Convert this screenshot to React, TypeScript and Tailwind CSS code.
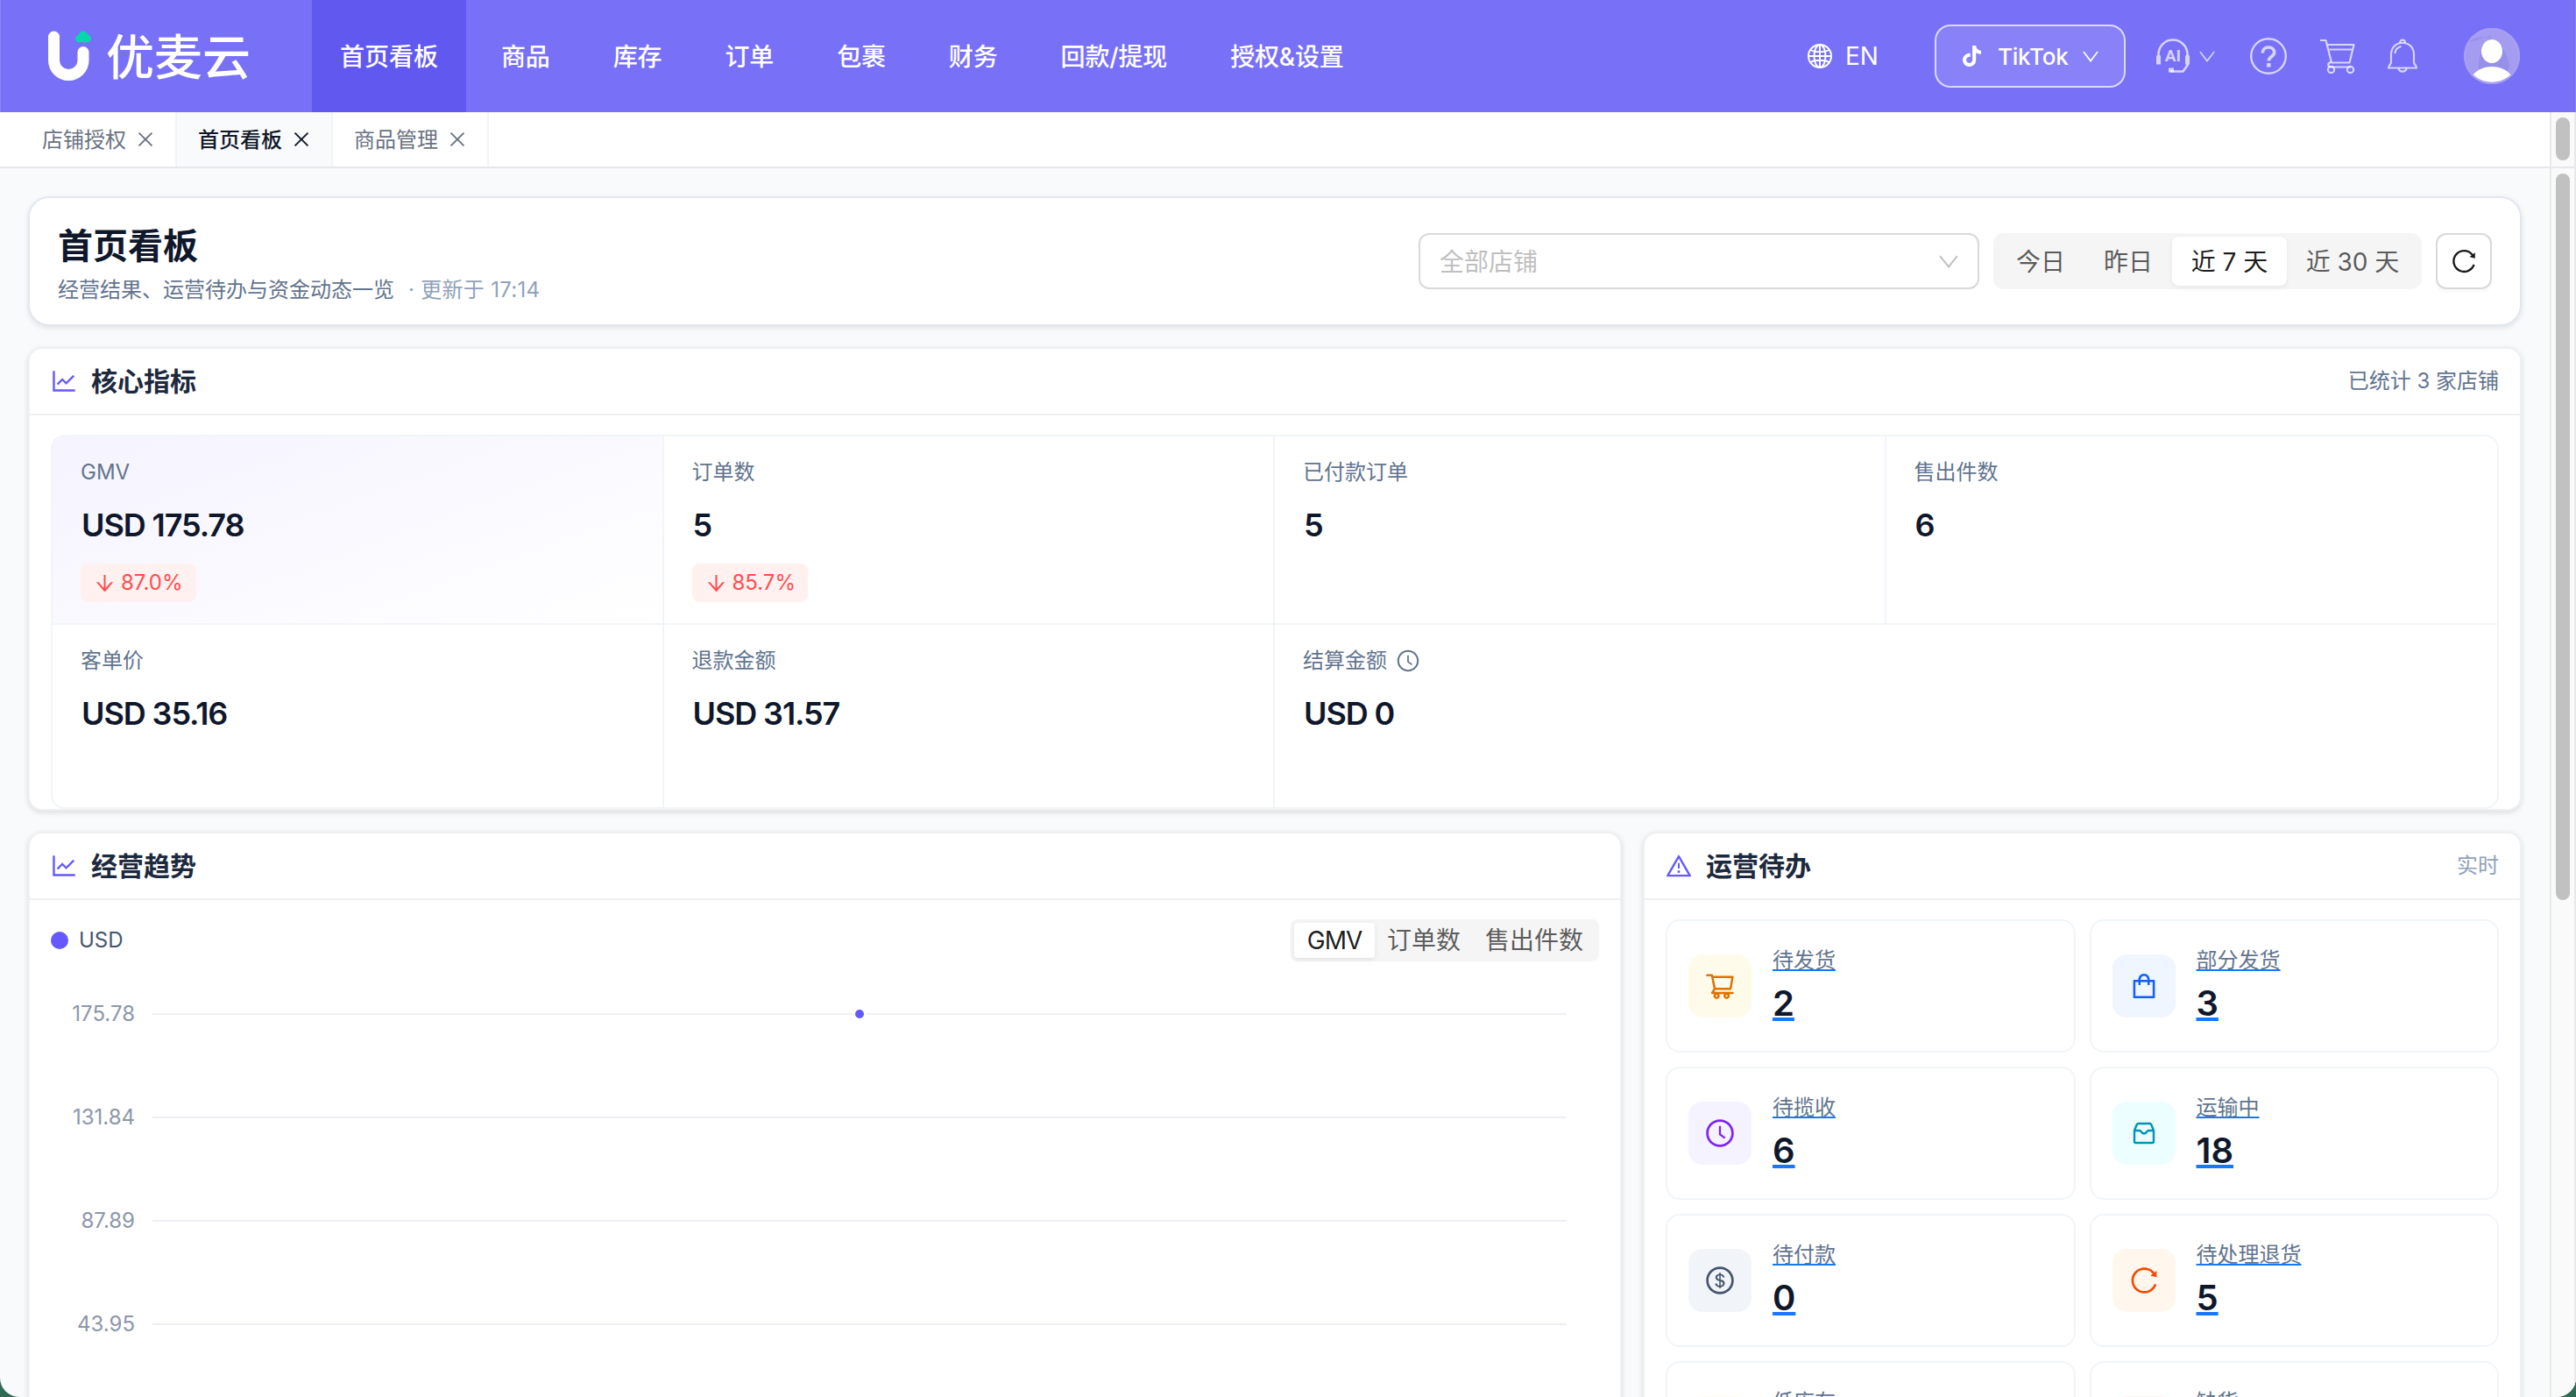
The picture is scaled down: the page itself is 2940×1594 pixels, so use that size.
import type { ReactNode } from "react";
import {
  AiOutlineArrowDown,
  AiOutlineClockCircle,
  AiOutlineClose,
  AiOutlineDollar,
  AiOutlineLineChart,
  AiOutlineReload,
  AiOutlineShopping,
  AiOutlineShoppingCart,
  AiOutlineWarning,
} from "react-icons/ai";
import { FaTiktok } from "react-icons/fa";

const NAV = ["首页看板", "商品", "库存", "订单", "包裹", "财务", "回款/提现", "授权&设置"];
const TABS = ["店铺授权", "首页看板", "商品管理"];

function Logo() {
  return (
    <div className="flex h-full items-center pl-[53px]">
      <svg className="h-[58px] w-[52px]" viewBox="54 35 52 58" fill="none">
        <path d="M61.5 42V68.75A16.75 16.75 0 0 0 95 68.75V59.5" stroke="#fff" strokeWidth="13" strokeLinecap="round" />
        <path
          d="M90 48.2a3.9 3.9 0 0 1-3.9-4.2c0-2 1.6-3.6 3.5-4 .9-2.6 2.9-4.4 5.5-4.4s4.600 1.800 5.500 4.400c2 .4 3.500 2 3.500 4a3.900 3.900 0 0 1-3.900 4.200z"
          fill="#05d6ac"
        />
      </svg>
      <span className="ml-[15px] pt-[2px] text-[55px] leading-[64px] font-medium">优麦云</span>
    </div>
  );
}

function Chevron({ className }: { className: string }) {
  return (
    <svg className={className} viewBox="0 0 20 14" fill="none" stroke="currentColor" preserveAspectRatio="none">
      <path d="M1 1L10 12.500L19 1" strokeWidth="1.8" />
    </svg>
  );
}

function Globe() {
  return (
    <svg className="size-[30px]" viewBox="0 0 30 30" fill="none" stroke="currentColor" strokeWidth="2">
      <circle cx="15" cy="15" r="13" />
      <ellipse cx="15" cy="15" rx="6.500" ry="13" />
      <path d="M15 2v26M2 15h26M4.500 8c5 3 16 3 21 0M4.500 22c5-3 16-3 21 0" />
    </svg>
  );
}

function Header() {
  return (
    <header className="flex h-[128px] shrink-0 items-center border-x border-[#8b84f9] bg-[#7870f7] text-white">
      <div className="h-full w-[355px]">
        <Logo />
      </div>
      <nav className="flex h-full gap-2">
        {NAV.map((item, i) => (
          <a
            key={item}
            className={
              i === 0
                ? "flex items-center bg-[#6158f0] px-8 pt-[2px] text-[28px] font-medium"
                : "flex items-center px-8 pt-[2px] text-[28px] font-medium tracking-[-0.150px]"
            }
          >
            {item}
          </a>
        ))}
      </nav>
      <div className="ml-auto flex items-center pr-[63px]">
        <Globe />
        <span className="ml-[14px] w-[102px] text-[28px]">EN</span>
        <div className="flex h-[72px] w-[218px] items-center rounded-[18px] border-2 border-white/70 bg-white/12 pl-[30px]">
          <FaTiktok className="h-[24px] w-[21px]" />
          <span className="ml-[19px] w-[97px] text-[26px] font-medium tracking-[-0.200px]">TikTok</span>
          <Chevron className="h-[13px] w-[18px]" />
        </div>
        <div className="flex items-center text-white/70">
          <svg className="ml-[33px] h-[40px] w-[42px]" viewBox="0 0 42 40" fill="none" stroke="currentColor">
            <path d="M4.500 20v-2a16.500 16.500 0 0 1 33 0v2M37.500 29v1.500l-5 7H18" strokeWidth="2.600" />
            <path d="M4.500 19.500v10M37.500 19.500v10" strokeWidth="5" />
            <path d="M16 36h6" strokeWidth="5" />
            <text x="21" y="26" textAnchor="middle" fontSize="19" fontWeight="700" fontFamily="Roboto, sans-serif" fill="currentColor" stroke="none">
              AI
            </text>
          </svg>
          <Chevron className="ml-[9px] h-[13px] w-[18px]" />
          <svg className="ml-[40px] size-[42px]" viewBox="0 0 42 42" fill="none" stroke="currentColor">
            <circle cx="21" cy="21" r="19.800" strokeWidth="2.400" />
            <path d="M14.300 17.500c0-4 2.700-6.500 6.700-6.500s6.700 2.300 6.700 5.800c0 4.700-6.400 4.700-6.400 9.700" strokeWidth="3.600" />
            <path d="M21.300 29v4.500" strokeWidth="4.500" />
          </svg>
          <svg className="ml-[38px] h-[40px] w-[42px]" viewBox="0 0 42 40" fill="none" stroke="currentColor" strokeWidth="2.200" strokeLinejoin="round">
            <path d="M0 2h6.500l6.500 25.500h20.500L38.500 7H8.500M10.500 12.500h26" />
            <path d="M13 27c-5 0-5 5.500 0 5.500h22" />
            <circle cx="12.500" cy="35.500" r="3.600" />
            <circle cx="34.500" cy="35.500" r="3.600" />
          </svg>
          <svg className="ml-[34px] h-[40px] w-[36px]" viewBox="0 0 36 40" fill="none" stroke="currentColor" strokeWidth="2.200" strokeLinejoin="round">
            <path d="M18 5C10 5 5 10.500 5 18v9c0 3-3 3-3 6.500h32c0-3.500-3-3.500-3-6.500v-9C31 10.500 26 5 18 5z" />
            <path d="M15 5c0-4.500 6-4.500 6 0M13.500 33.500c0 5.500 9 5.500 9 0M9.500 17c0-4.500 3-7 7-8" />
          </svg>
        </div>
        <svg className="ml-[52px] size-[64px]" viewBox="0 0 64 64">
          <circle cx="32" cy="32" r="32" fill="#a39cf0" />
          <path d="M4 17C22 2 50 14 52 46L32 62 18 52C14 34 22 16 34 8z" fill="#9790ea" />
          <circle cx="32" cy="32" r="31" fill="none" stroke="#a7a0f3" strokeWidth="2" />
          <ellipse cx="32" cy="26.500" rx="12" ry="13.500" fill="#fff" />
          <path d="M10.500 53C22 41 42 41 53.500 53 42 64.500 22 64.500 10.500 53z" fill="#fff" />
        </svg>
      </div>
    </header>
  );
}

function TabBar() {
  return (
    <div className="flex h-[64px] shrink-0 border-b-2 border-[#e5e7eb] bg-white">
      <div className="flex flex-1 pl-[24px]">
        {TABS.map((tab, i) => (
          <div
            key={tab}
            className={
              i === 1
                ? "flex w-[178px] items-center border-r-2 border-[#f3f4f6] bg-[#f9fafb] pl-6 text-[24px] font-medium text-[#101828]"
                : "flex w-[178px] items-center border-r-2 border-[#f3f4f6] pl-6 text-[24px] text-[#6a7282]"
            }
          >
            <span className="pt-[2px]">{tab}</span>
            <AiOutlineClose className="ml-[10px] size-[24px]" />
          </div>
        ))}
      </div>
      <Scrollbar>
        <div className="mt-[6px] h-[49px] w-[16px] rounded-full bg-[#c1c1c1]" />
      </Scrollbar>
    </div>
  );
}

function Scrollbar({ children }: { children: ReactNode }) {
  return <div className="flex w-[30px] justify-center border-x-2 border-[#e8e8e8] bg-[#fafafa]">{children}</div>;
}

function PageHeading() {
  return (
    <section className="flex h-[148px] shrink-0 items-center rounded-[24px] border-2 border-[#e2e8f0] bg-white px-8 shadow-[0_2px_6px_rgba(0,0,0,0.1)]">
      <div className="pt-[9px]">
        <h1 className="text-[40px] leading-[56px] font-semibold text-[#0f172b]">首页看板</h1>
        <p className="text-[24px] leading-[44px] text-[#62748e]">
          经营结果、运营待办与资金动态一览<span className="ml-[16px] tracking-[0.300px] text-[#90a1b9]">· 更新于 17:14</span>
        </p>
      </div>
      <div className="ml-auto flex gap-4">
        <div className="flex h-[64px] w-[640px] items-center justify-between rounded-[12px] border-2 border-[#d9d9d9] px-[22px] text-[28px] text-[#bfbfbf]">
          <span className="pt-[1px]">全部店铺</span>
          <Chevron className="h-[15px] w-[22px]" />
        </div>
        <div className="flex h-[64px] rounded-[12px] bg-[#f5f5f5] p-1 text-[28px] text-black/65">
          <span className="flex w-[100px] items-center justify-center pt-[1px]">今日</span>
          <span className="flex w-[100px] items-center justify-center pt-[1px]">昨日</span>
          <span className="flex w-[131px] items-center justify-center rounded-[8px] bg-white pt-[1px] text-black/90 shadow-[0_2px_6px_rgba(0,0,0,0.06)]">
            近 7 天
          </span>
          <span className="flex w-[150px] items-center justify-center pt-[1px]">近 30 天</span>
        </div>
        <button className="flex size-[64px] items-center justify-center rounded-[12px] border-2 border-[#d9d9d9] text-black/90 shadow-[0_4px_0_rgba(0,0,0,0.02)]">
          <AiOutlineReload className="size-[32px]" />
        </button>
      </div>
    </section>
  );
}

function Card({ icon, title, extra, className, children }: { icon: ReactNode; title: string; extra?: ReactNode; className: string; children: ReactNode }) {
  return (
    <section className={`${className} flex flex-col overflow-hidden rounded-[16px] border-2 border-[#f0f0f0] bg-white shadow-[0_2px_6px_rgba(0,0,0,0.13)]`}>
      <div className="flex h-[76px] shrink-0 items-center border-b-2 border-[#f0f0f0] px-6 text-[24px]">
        <span className="-mx-[2px] text-[34px] text-[#6459ff]">{icon}</span>
        <h2 className="ml-4 flex-1 text-[30px] leading-[44px] font-semibold text-[#1d293d]">{title}</h2>
        {extra}
      </div>
      {children}
    </section>
  );
}

type Metric = { label: string; value: string; change?: string; cell: string; clock?: boolean };

const METRICS: Metric[] = [
  { label: "GMV", value: "USD 175.78", change: "87.0%", cell: "border-r-2 border-b-2 bg-[linear-gradient(160deg,#f5f3ff_0%,#ffffff_100%)]" },
  { label: "订单数", value: "5", change: "85.7%", cell: "border-r-2 border-b-2" },
  { label: "已付款订单", value: "5", cell: "border-r-2 border-b-2" },
  { label: "售出件数", value: "6", cell: "border-b-2" },
  { label: "客单价", value: "USD 35.16", cell: "border-r-2" },
  { label: "退款金额", value: "USD 31.57", cell: "border-r-2" },
  { label: "结算金额", value: "USD 0", cell: "", clock: true },
];

function MetricCell({ label, value, change, cell, clock }: Metric) {
  return (
    <div className={`${cell} flex flex-col items-start border-[#f1f5f9] px-8 pt-[22px]`}>
      <div className="flex h-[38px] items-center text-[24px] text-[#62748e]">
        {label}
        {clock && <AiOutlineClockCircle className="ml-[10px] size-[28px]" />}
      </div>
      <div className="mt-[17px] ml-[1px] text-[36px] leading-[48px] font-semibold tracking-[-1.100px] text-[#0f172b]">{value}</div>
      {change && (
        <div className="mt-[20px] flex h-[44px] w-[132px] items-center rounded-[8px] bg-[#fff1f0] pl-[14px] text-[24px] text-[#ff4d4f]">
          <AiOutlineArrowDown className="size-[27px]" />
          <span className="ml-[5px]">{change}</span>
        </div>
      )}
    </div>
  );
}

const TICKS = ["175.78", "131.84", "87.89", "43.95"];

function TrendChart() {
  return (
    <div className="relative mt-[1px] flex flex-col">
      {TICKS.map((t) => (
        <div key={t} className="flex h-[118px] items-center pr-[61px]">
          <span className="w-[120px] text-right text-[24px] text-[#8d96ab]">{t}</span>
          <span className="ml-[20px] h-[2px] flex-1 bg-[#eeeff4]" />
        </div>
      ))}
      <span className="absolute top-[52px] left-[940px] size-[14px] rounded-full border-2 border-white bg-[#6459ff]" />
    </div>
  );
}

function Tray() {
  return (
    <svg className="size-[36px]" viewBox="-18 -18 36 36" fill="none" stroke="currentColor" strokeWidth="2.400" strokeLinejoin="round">
      <path d="M-6.500-11h13a2 2 0 0 1 1.800 1.200L11-3v12.500a1.500 1.500 0 0 1-1.500 1.500h-19a1.500 1.500 0 0 1-1.500-1.500V-3l2.700-6.800A2 2 0 0 1-6.500-11z" />
      <path d="M-11-3h6c1.500 0 2 3.500 5 3.500S3.500-3 5-3h6" />
    </svg>
  );
}

const TODOS = [
  { label: "待发货", value: "2", tone: "bg-amber-50 text-amber-600", icon: <AiOutlineShoppingCart /> },
  { label: "部分发货", value: "3", tone: "bg-blue-50 text-blue-600", icon: <AiOutlineShopping /> },
  { label: "待揽收", value: "6", tone: "bg-violet-50 text-violet-600", icon: <AiOutlineClockCircle /> },
  { label: "运输中", value: "18", tone: "bg-cyan-50 text-cyan-600", icon: <Tray /> },
  { label: "待付款", value: "0", tone: "bg-slate-100 text-slate-600", icon: <AiOutlineDollar /> },
  { label: "待处理退货", value: "5", tone: "bg-orange-50 text-orange-600", icon: <AiOutlineReload /> },
  { label: "低库存", value: "0", tone: "bg-yellow-50 text-yellow-600", icon: <AiOutlineWarning /> },
  { label: "缺货", value: "0", tone: "bg-rose-50 text-rose-600", icon: <AiOutlineWarning /> },
];

export default function App() {
  return (
    <div className="h-[1594px] w-[2940px] overflow-hidden bg-[#2f6a55] font-['Inter','Noto_Sans_CJK_SC',sans-serif]">
      <div className="flex h-full flex-col overflow-hidden rounded-b-[22px] bg-[#f9fafb]">
        <Header />
        <TabBar />
        <div className="flex min-h-0 flex-1">
          <main className="flex flex-1 flex-col gap-6 overflow-hidden px-8 pt-8">
            <PageHeading />

            <Card
              className="h-[529px] shrink-0"
              icon={<AiOutlineLineChart />}
              title="核心指标"
              extra={<span className="text-[#62748e]">已统计 3 家店铺</span>}
            >
              <div className="mx-6 mt-[22px] grid h-[427px] grid-cols-4 grid-rows-[215px_208px] overflow-hidden rounded-[16px] border-2 border-[#f1f5f9]">
                {METRICS.map((m) => (
                  <MetricCell key={m.label} {...m} />
                ))}
              </div>
            </Card>

            <div className="flex shrink-0 gap-6">
              <Card className="h-[760px] w-[1819px] shrink-0" icon={<AiOutlineLineChart />} title="经营趋势">
                <div className="mt-[22px] flex h-[48px] items-center px-6">
                  <span className="size-[20px] rounded-full bg-[#6459ff]" />
                  <span className="ml-3 flex-1 text-[24px] text-[#45556c]">USD</span>
                  <div className="flex h-[48px] rounded-[8px] bg-[#f5f5f5] p-1 text-[28px] text-black/65">
                    <span className="flex w-[92px] items-center justify-center rounded-[4px] bg-white tracking-[-1px] text-black/90 shadow-[0_2px_6px_rgba(0,0,0,0.08)]">
                      GMV
                    </span>
                    <span className="flex w-[112px] items-center justify-center">订单数</span>
                    <span className="flex w-[140px] items-center justify-center">售出件数</span>
                  </div>
                </div>
                <TrendChart />
              </Card>

              <Card
                className="h-[760px] flex-1"
                icon={<AiOutlineWarning className="mx-px size-[32px]" />}
                title="运营待办"
                extra={<span className="text-[#90a1b9]">实时</span>}
              >
                <div className="grid grid-cols-2 gap-4 px-6 pt-[22px]">
                  {TODOS.map((t) => (
                    <a key={t.label} className="flex h-[152px] items-center rounded-[16px] border-2 border-[#f1f5f9] px-6">
                      <span className={`${t.tone} flex size-[72px] items-center justify-center rounded-[16px] text-[36px]`}>{t.icon}</span>
                      <span className="ml-6 flex flex-col items-start">
                        <span className="text-[24px] leading-[36px] text-[#62748e] underline decoration-[#1677ff] decoration-[1.500px] underline-offset-[2px]">
                          {t.label}
                        </span>
                        <span className="mt-[3px] text-[40px] leading-[56px] font-semibold text-[#0f172b] underline decoration-[#1677ff] decoration-4 underline-offset-[2px] [text-decoration-skip-ink:none]">
                          {t.value}
                        </span>
                      </span>
                    </a>
                  ))}
                </div>
              </Card>
            </div>
          </main>
          <Scrollbar>
            <div className="mt-[6px] h-[829px] w-[16px] rounded-full bg-[#c1c1c1]" />
          </Scrollbar>
        </div>
      </div>
    </div>
  );
}
